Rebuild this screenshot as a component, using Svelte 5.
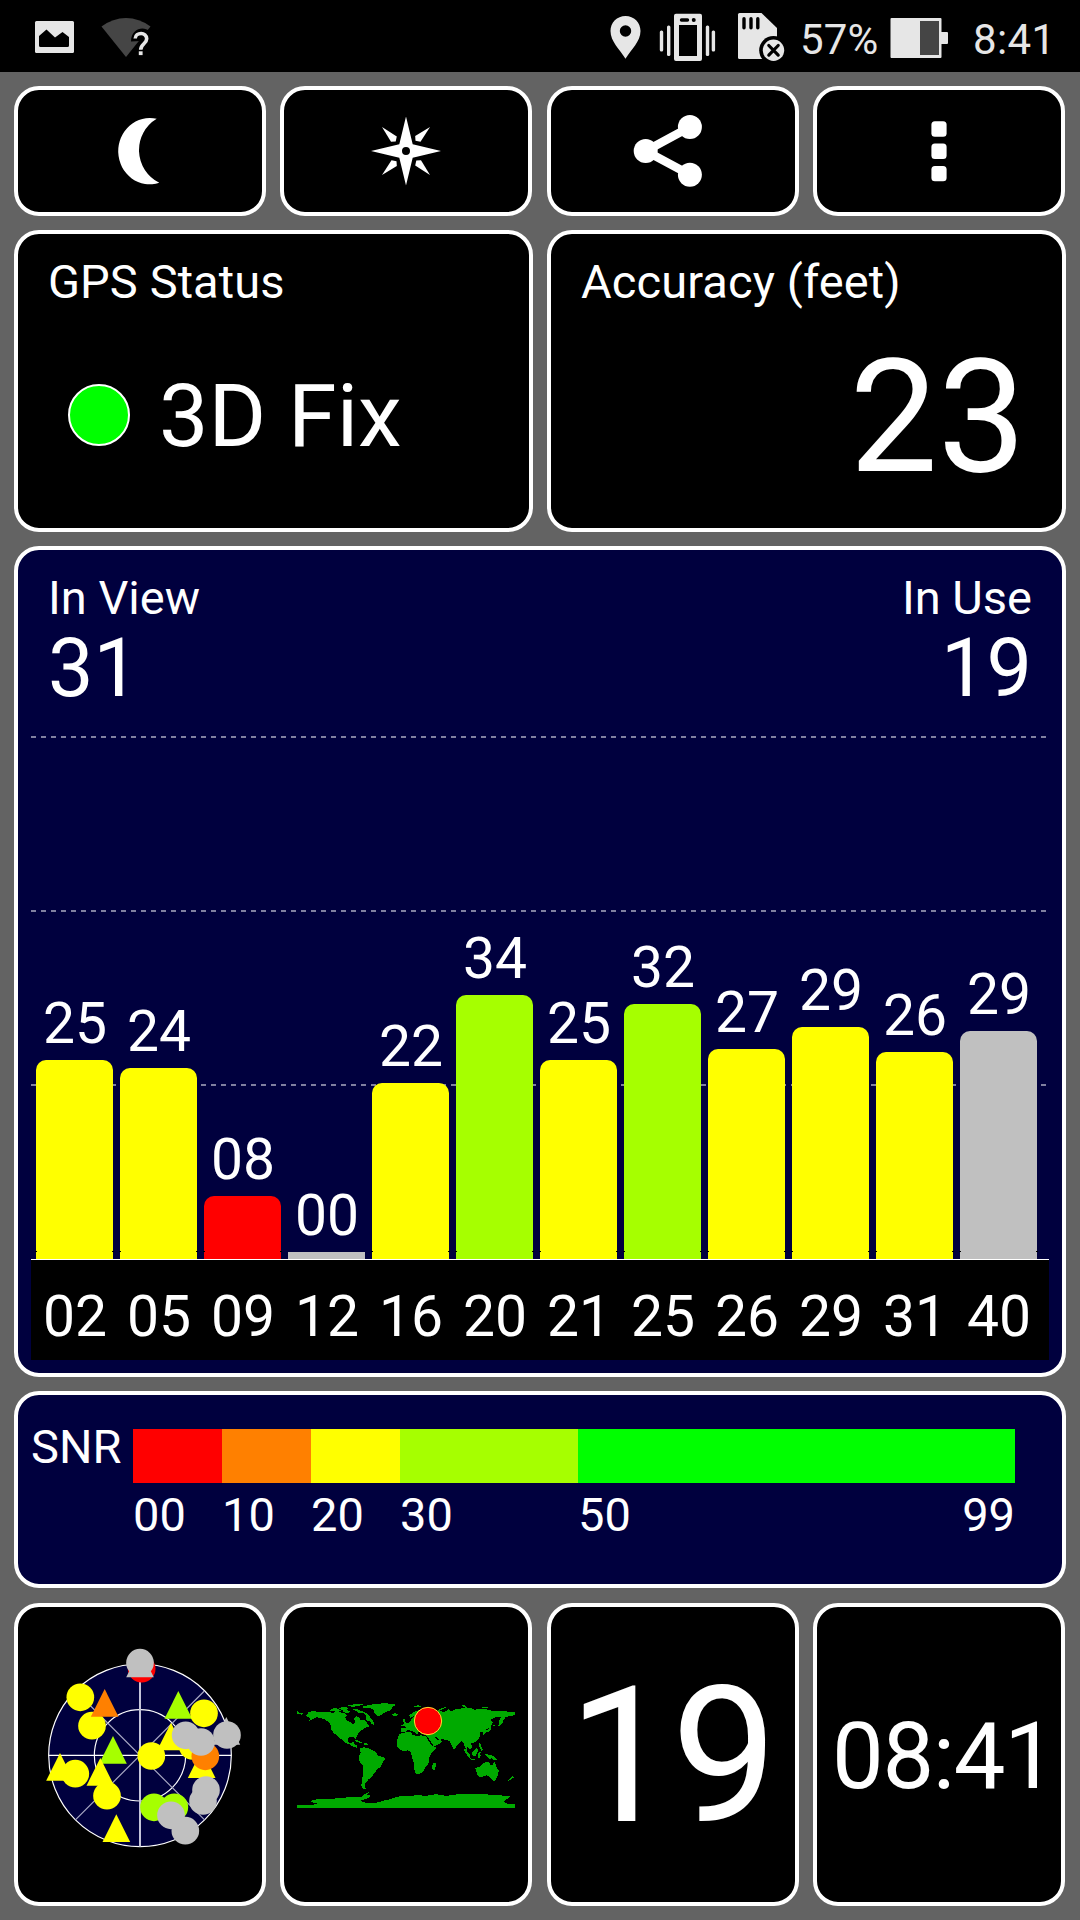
<script>
  const bars = [
    { id: '02', snr: '25', h: 199, c: 'yellow' },
    { id: '05', snr: '24', h: 191, c: 'yellow' },
    { id: '09', snr: '08', h: 63, c: 'red' },
    { id: '12', snr: '00', h: 7, c: 'gray' },
    { id: '16', snr: '22', h: 176, c: 'yellow' },
    { id: '20', snr: '34', h: 264, c: 'lime' },
    { id: '21', snr: '25', h: 199, c: 'yellow' },
    { id: '25', snr: '32', h: 255, c: 'lime' },
    { id: '26', snr: '27', h: 210, c: 'yellow' },
    { id: '29', snr: '29', h: 232, c: 'yellow' },
    { id: '31', snr: '26', h: 207, c: 'yellow' },
    { id: '40', snr: '29', h: 228, c: 'gray' }
  ];

  // Satellites on the sky view in paint order: shape, x, y, colour
  const sats = [
    ['c', 335, 114, 'red'], ['t', 330, 98, 'gray'], ['c', 330, 96, 'gray'],
    ['c', 151, 200, 'yellow'], ['c', 186, 285, 'yellow'], ['t', 224, 216, 'orange'],
    ['t', 445, 222, 'lime'], ['c', 522, 248, 'yellow'],
    ['t', 423, 317, 'yellow'], ['c', 488, 346, 'yellow'],
    ['t', 515, 400, 'yellow'], ['c', 526, 377, 'orange'],
    ['c', 467, 314, 'gray'], ['c', 513, 334, 'gray'],
    ['t', 589, 300, 'gray'], ['c', 591, 313, 'gray'],
    ['c', 364, 376, 'yellow'], ['t', 249, 357, 'lime'],
    ['t', 90, 408, 'yellow'], ['c', 136, 429, 'yellow'],
    ['t', 211, 423, 'yellow'], ['c', 231, 495, 'yellow'],
    ['t', 259, 592, 'yellow'],
    ['c', 433, 530, 'lime'], ['c', 372, 530, 'lime'],
    ['c', 423, 554, 'gray'], ['c', 466, 600, 'gray'],
    ['c', 528, 478, 'gray'], ['c', 519, 511, 'gray']
  ];
</script>

<div class="screen">
  <header class="status">
    <svg width="160" height="72" viewBox="0 0 160 72">
      <rect x="35" y="21" width="39" height="32" rx="1.5" fill="#e6e6e6" />
      <path d="M39 36l7.5-6.500 8.500 8 7.500-5.500 6.500 5V45.500q0 1.500-1.500 1.500H40.500q-1.500 0-1.500-1.500z" fill="#000" />
      <path d="M101.500 26.500Q113 18 126 18t24.500 8.500L126 57z" fill="#454545" />
      <path d="M131 41.500c0-17 22-17 21-2 0 5-5 6-6 11v10h-9V47l4-6z" fill="#000" />
      <path d="M135.200 38.500c.3-6.500 11.500-7 11.500.3 0 5-6 5-6 11" fill="none" stroke="#e6e6e6" stroke-width="3.600" />
      <rect x="138.800" y="51.300" width="3.800" height="3.800" fill="#e6e6e6" />
    </svg>
    <svg class="tray" width="200" height="72" viewBox="600 0 200 72" fill="#e6e6e6">
      <path fill-rule="evenodd" d="M625.500 16c-8.500 0-15 6.500-15 15 0 10.500 9 18 15 27.700 6-9.700 15-17.200 15-27.700 0-8.500-6.500-15-15-15zm0 9.300a5.700 5.700 0 1 1 0 11.400 5.700 5.700 0 0 1 0-11.400z" />
      <rect x="659.800" y="30.500" width="3.400" height="21" rx="1.500" />
      <rect x="667" y="25.500" width="3.400" height="30.500" rx="1.500" />
      <rect x="705.800" y="25.500" width="3.400" height="30.500" rx="1.500" />
      <rect x="711.700" y="30.500" width="3.400" height="21" rx="1.500" />
      <path fill-rule="evenodd" d="M676 13.700h24q2 0 2 2V59q0 2-2 2h-24q-2 0-2-2V15.700q0-2 2-2zM679 25v31h18V25zM681.500 18.300a1.700 1.700 0 0 0 0 3.400h6a1.700 1.700 0 0 0 0-3.400zM693.700 18a2 2 0 1 0 .1 4 2 2 0 0 0-.1-4z" />
      <path d="M739.500 13h22L777 28v31h-37.500q-1.500 0-1.500-1.500v-43q0-1.500 1.500-1.500z" />
      <path d="M744 18.800v9M751 18.800v9M757.800 18.800v9" stroke="#000" stroke-width="3.400" stroke-linecap="round" />
      <circle cx="773.500" cy="50.300" r="14.300" fill="#000" />
      <circle cx="773.500" cy="50.300" r="10.700" />
      <path d="M768.800 45.500l9.400 9.600M778.200 45.500l-9.400 9.600" stroke="#000" stroke-width="3.200" stroke-linecap="round" />
    </svg>
    <span class="percent">57%</span>
    <svg width="59" height="72" viewBox="0 0 59 72">
      <path d="M1.500 18H50.500q1 0 1 1V32H57q1 0 1 1V43q0 1-1 1H51.500V57q0 1-1 1H1.500q-1 0-1-1V19q0-1 1-1z" fill="#e6e6e6" />
      <rect x="30" y="21" width="19" height="34" fill="#454545" />
    </svg>
    <span class="clock">8:41</span>
  </header>

  <main>
    <div class="four">
      <button class="card icon" aria-label="Night mode">
        <svg width="80" height="80" viewBox="101.300 111 80 80">
          <path d="M158 118.800A31.500 33.200 0 1 0 160.600 182.800A36.500 36.500 0 0 1 158 118.800z" fill="#fff" />
        </svg>
      </button>
      <button class="card icon" aria-label="Compass">
        <svg width="80" height="80" viewBox="-40 -40 80 80" fill="#fff">
          <path fill-rule="evenodd" d="M0-34.500L6.700-6.700 35 0 6.700 6.700 0 34.500-6.700 6.700-35 0-6.700-6.700zM0-4A4 4 0 1 0 0 4 4 4 0 1 0 0-4z" />
          {#each [0, 90, 180, 270] as a}
            <path transform="rotate({a})" d="M-24-24L-15-9.200-10.300-9.500-9.200-14.500z" />
          {/each}
        </svg>
      </button>
      <button class="card icon" aria-label="Share">
        <svg width="90" height="80" viewBox="628 111 90 80" fill="#fff">
          <path d="M690 127L645.700 151 690 174.700" fill="none" stroke="#fff" stroke-width="8.500" />
          <circle cx="645.700" cy="151" r="12" />
          <circle cx="689.900" cy="127" r="12" />
          <circle cx="689.900" cy="174.700" r="12" />
        </svg>
      </button>
      <button class="card icon" aria-label="More">
        <svg width="40" height="80" viewBox="0 0 40 80" fill="#fff">
          <rect x="12.400" y="10.300" width="15.200" height="15.400" rx="3.500" />
          <rect x="12.400" y="32.600" width="15.200" height="15.400" rx="3.500" />
          <rect x="12.400" y="54.900" width="15.200" height="15.400" rx="3.500" />
        </svg>
      </button>
    </div>

    <div class="two">
      <section class="card info">
        <div class="label">GPS Status</div>
        <div class="fix"><i></i><span>3D Fix</span></div>
      </section>
      <section class="card info">
        <div class="label">Accuracy (feet)</div>
        <div class="accuracy">23</div>
      </section>
    </div>

    <section class="card chart">
      <div class="counts">
        <div><div class="label">In View</div><div class="count">31</div></div>
        <div class="end"><div class="label">In Use</div><div class="count">19</div></div>
      </div>
      <div class="plot">
        {#each bars as b}
          <div class="col">
            <span class="num">{b.snr}</span>
            <div class="bar {b.c}" class:flat={b.h < 10} style="height: {b.h}px"></div>
          </div>
        {/each}
      </div>
      <div class="axis">
        {#each bars as b}<span class="num">{b.id}</span>{/each}
      </div>
    </section>

    <section class="card snr">
      <div class="label">SNR</div>
      <div class="scale">
        <div class="segments">
          <i class="red"></i><i class="orange"></i><i class="yellow"></i><i class="lime"></i><i class="green"></i>
        </div>
        <div class="segments ticks label">
          <span>00</span><span>10</span><span>20</span><span>30</span>
          <span class="last"><b>50</b><b>99</b></span>
        </div>
      </div>
    </section>

    <div class="four bottom">
      <section class="card tile">
        <svg width="220" height="240" viewBox="0 13 660 720">
          <circle cx="330" cy="374" r="274" fill="#00003e" stroke="#fff" stroke-width="3.500" />
          <circle cx="330" cy="374" r="137" fill="none" stroke="#fff" stroke-width="3.500" />
          <path d="M137 567L523 181M137 181L523 567" stroke="#a8a8c4" stroke-width="3.500" />
          <path d="M330 100V648" stroke="#c4c4d8" stroke-width="6" />
          <path d="M56 374H604" stroke="#fff" stroke-width="4" />
          {#each sats as [shape, x, y, c]}
            {#if shape === 'c'}
              <circle cx={x} cy={y} r="41.500" class={c} />
            {:else}
              <path d="M{x} {y - 41}L{x + 41.500} {y + 42}H{x - 41.500}z" class={c} />
            {/if}
          {/each}
        </svg>
      </section>
      <section class="card tile">
        <svg width="240" height="150" viewBox="18 0 720 450" shape-rendering="crispEdges">
          <g fill="#00aa00">
            <path d="M51 90l5 7 12 3-2 4-12-3-3 4z" />
            <path d="M78 108L86 96 100 93 122 97 142 95 156 98 176 96 194 100 202 106 196 113 200 122 212 126 220 133 226 126 222 116 228 108 238 112 242 122 252 118 260 128 268 140 256 143 246 150 236 158 230 168 228 178 222 172 208 172 203 178 206 188 214 190 220 184 222 192 230 196 232 204 220 200 206 192 192 186 184 178 172 168 160 158 152 146 152 136 146 126 134 118 120 113 108 112 96 118 86 124 92 116z" />
            <path d="M150 92l10-8 14 2 10 6-12 4zM176 84l16-4 14 4-8 6-14 0zM204 76l22-4 30-1-16 6-22 4zM218 88l12-2 10 6 14 4 14 10 4 8 8 8 2 12-8-2-4-8-10-2-4-8 4-6-10-8-14-2zM184 92l18-2 12 6-16 4z" />
            <path d="M248 80l24-6 34-4 34 1 6 4-8 6-4 8-8 4-14 6-14 10-8-2-6-8-4-10-14-6-16 0z" />
            <path d="M334 102l12-2 8 2-6 6-10-1zM224 180l12 2 14 7-10-1-14-4zM250 189l14 2 0 4-12-1z" />
            <path d="M240 204l12-2 12 2 12 6 12 6 4 10 20 6 3 6-9 12-4 12-10 4-6 12-8 8-6 8-8 4-2 6-6 4 0 8-2 6 6 4-4 2-10-3-2-8 2-14 2-14 2-16 0-14-8-8-6-12 0-10 6-10z" />
            <path d="M51 374L100 374 112 370 90 366 96 360 120 357 150 356 180 355 200 352 224 352 244 350 254 342 268 336 264 342 254 346 270 346 268 352 254 358 240 362 262 370 290 368 310 362 330 358 350 350 380 348 410 346 440 347 466 343 480 344 500 348 520 344 550 342 580 343 600 342 630 344 660 346 690 349 682 356 672 366 682 371 705 372V384H51z" />
            <path d="M357 163l14-5 22-2 4 8 14 4 12-2 18 4 8 14 6 12 6 5 8-2-2 8-14 14-5 12 0 12-6 10-6 6-4 10-8 8-10 4-6-2-6-14 0-16-4-12-2-10-4-12-8-6-12 2-10-2-12-12 1-16z" />
            <path d="M458 252l6-4 5 5-5 17-6 0-2-10z" />
            <path d="M362 156L364 144 378 143 372 135 388 128 398 112 404 108 390 114 388 106 398 98 412 92 430 88 460 92 484 93 490 97 500 92 506 86 512 94 526 88 540 86 556 82 572 84 584 89 602 86 620 88 640 94 670 92 690 97 705 97 704 106 690 108 676 112 674 118 664 128 658 135 656 124 662 112 645 112 630 120 638 128 628 144 618 148 612 162 606 156 598 158 600 166 598 174 592 182 582 188 572 190 577 200 570 208 562 200 560 212 554 200 550 188 545 184 534 192 526 204 522 210 516 198 510 184 500 180 480 176 486 184 478 192 462 200 454 198 446 184 438 166 422 160 418 152 412 162 402 156 392 152 384 148 376 156z" />
            <path d="M362 136l8-3 2-4-3-6-1-8 6 3 2 8 4 5-2 5-10 3zM400 80l14-4 14 2-10 4zM472 92l8-6 14-4 6 0-14 6-8 5z" />
            <path d="M544 76l10 0 8 6-8 0zM604 82l16-2 8 4-16 0zM608 162l6-10 12-4 6-10 2 4-4 12-12 4-8 6zM638 134l8 2-4 5zM652 136l6-2 8-10 6-12-3 14-12 12z" />
            <path d="M551 204l6 4 12 16 4 14-8-6-10-16zM574 218l8-6 6-8 6 6-2 10-6 8-10-2zM568 236l12 1 10 4-14 0zM594 218l10-2-6 6 6 4-4 3-2 8-4-5zM598 188l4 4 4 12 4 6-6 2-6-12zM614 222l14 2 12 4 8 8 4 6-10-2-6-5-8 2-8-7z" />
            <path d="M586 264l12-4 10-8 8-6 12 0 2 8 8 2 4-12 5 8 3 10 6 10-1 12-6 10-4 8-10-4-6-6-8-6-12 4-10 1-6-4z" />
            <path d="M638 298l8-1-2 5-4 1zM696 286l6 6-6 4-12 8 0-4 10-7z" />
          </g>
          <path d="M442 172l16 26M466 172l10 7" stroke="#000" stroke-width="4" />
          <circle cx="444" cy="123" r="41" fill="#f00" stroke="#ffe030" stroke-width="3" shape-rendering="auto" />
        </svg>
      </section>
      <section class="card tile"><div class="used">19</div></section>
      <section class="card tile time"><div>08:41</div></section>
    </div>
  </main>
</div>

<style>
  :global(body) { margin: 0; background: #636363; }
  .screen {
    width: 1080px;
    height: 1920px;
    overflow: hidden;
    background: #636363;
    color: #fff;
    font-family: Roboto, "Liberation Sans", sans-serif;
    font-weight: 400;
  }
  svg { display: block; flex: none; }
  .status {
    display: flex;
    height: 72px;
    box-sizing: border-box;
    background: #000;
    color: #e6e6e6;
    font-size: 42px;
    line-height: 79px;
  }
  .tray { margin-left: 440px; }
  .percent { width: 90px; letter-spacing: 0.2px; }
  .clock { margin-left: 24px; letter-spacing: 0.4px; }
  main {
    display: grid;
    grid-template-rows: 130px 302px 831px 197px 304px;
    row-gap: 14px;
    padding: 14px 14px 0;
  }
  .four {
    display: grid;
    grid-template-columns: repeat(4, minmax(0, 1fr));
    column-gap: 14.330px;
    padding-right: 1px;
  }
  .bottom { padding-top: 1px; }
  .two { display: grid; grid-template-columns: 1fr 1fr; column-gap: 14px; }
  .card {
    box-sizing: border-box;
    margin: 0;
    padding: 0;
    border: 4px solid #fff;
    border-radius: 25px;
    background: #000;
    color: inherit;
    font: inherit;
    min-width: 0;
  }
  .icon, .tile { display: flex; align-items: center; justify-content: center; }
  .label { font-size: 47px; line-height: 56px; white-space: nowrap; }
  .info { padding: 20px 36px 0 30px; }
  .info .label { letter-spacing: 0.1px; }
  .fix {
    display: flex;
    align-items: center;
    gap: 29px;
    margin-top: 54px;
    padding-left: 20px;
    font-size: 88px;
    line-height: 104px;
  }
  .fix i {
    box-sizing: border-box;
    width: 62px;
    height: 62px;
    margin-bottom: 2px;
    border: 2px solid #fff;
    border-radius: 50%;
    background: #0f0;
  }
  .accuracy { margin-top: 15px; font-size: 157px; line-height: 184px; text-align: right; }
  .chart, .snr { background: #00003e; }
  .counts { display: flex; justify-content: space-between; height: 160px; box-sizing: border-box; padding: 20px 30px 0; }
  .end { text-align: right; }
  .count { font-size: 81px; line-height: 86px; }
  .plot {
    --dash: repeating-linear-gradient(90deg, #8080a0 0 5px, transparent 5px 10px);
    display: flex;
    align-items: flex-end;
    gap: 7px;
    height: 549px;
    margin: 0 13px;
    padding-left: 5px;
    border-bottom: 1px solid #fff;
    background: var(--dash) 0 26px / 1015px 2px no-repeat,
      var(--dash) 0 200px / 1015px 2px no-repeat,
      var(--dash) 0 374px / 1015px 2px no-repeat;
  }
  .col { width: 77px; }
  .num { display: block; box-sizing: border-box; width: 77px; padding-left: 1px; font-size: 57px; line-height: 60px; text-align: center; }
  .col .num { margin-bottom: 6px; }
  .bar { position: relative; border-radius: 10px 10px 0 0; }
  .bar.flat { border-radius: 0; }
  .bar:not(.flat)::after {
    content: "";
    position: absolute;
    left: -1px;
    right: -1px;
    bottom: 7px;
    height: 1px;
    border: solid #000;
    border-width: 0 2px;
  }
  .axis {
    display: flex;
    gap: 7px;
    height: 100px;
    box-sizing: border-box;
    margin: 0 13px;
    padding: 27px 0 0 5px;
    background: #000;
  }
  .snr { display: grid; grid-template-columns: 102px 882px; padding: 24px 0 0 13px; }
  .scale { padding-top: 10px; }
  .segments { display: grid; grid-template-columns: 89px 89px 89px 178px 437px; }
  .segments i { height: 54px; }
  .ticks { margin-top: 4px; }
  .last { display: flex; justify-content: space-between; }
  .last b { font-weight: 400; }
  .used { padding: 5px 3px 0 0; font-size: 189px; line-height: 222px; letter-spacing: -3px; }
  .time { justify-content: flex-start; padding: 4px 0 0 15px; font-size: 92px; line-height: 108px; letter-spacing: -1.300px; }
  .red { background: #f00; fill: #f00; }
  .orange { background: #ff8000; fill: #ff8000; }
  .yellow { background: #ff0; fill: #ff0; }
  .lime { background: #a6ff00; fill: #a6ff00; }
  .green { background: #0f0; }
  .gray { background: #c0c0c0; fill: #c0c0c0; }
</style>
